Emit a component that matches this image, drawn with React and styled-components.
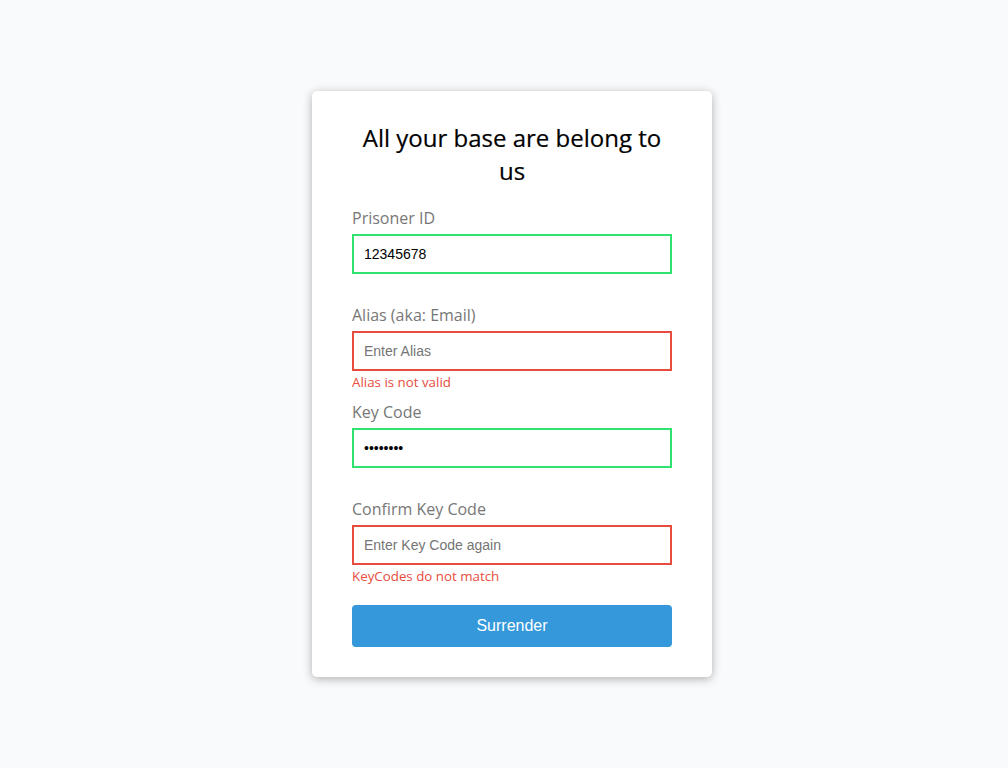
import React from "react";
import styled, { createGlobalStyle } from "styled-components";

const GlobalStyle = createGlobalStyle`
    * {
        box-sizing: border-box;
    }

    body {
        margin: 0;
        background-color: #f9fafb;
        font-family: "Open Sans", "Liberation Sans", sans-serif;
    }
`;

const Page = styled.main`
    min-height: 100vh;
    padding-left: 16px;

    display: flex;
    align-items: center;
    justify-content: center;
`;

const Card = styled.div`
    width: 400px;
    background-color: #fff;
    border-radius: 5px;
    box-shadow: 0 2px 10px rgba(0, 0, 0, 0.3);
    padding: 30px 40px;
`;

const Title = styled.h2`
    margin: 0 0 20px;
    text-align: center;
    font-size: 24px;
    font-weight: 400;
    line-height: 33px;
    color: #000;
    -webkit-text-stroke: 0.2px #000;
`;

const Field = styled.div`
    margin-bottom: 11px;
`;

const Label = styled.label`
    display: block;
    margin-bottom: 5px;
    font-size: 16px;
    line-height: 22px;
    color: #777;
`;

const Input = styled.input`
    display: block;
    width: 100%;
    height: 40px;
    padding: 10px;
    border: 2px solid ${({ $valid }) => ($valid ? "#2ee46f" : "#e74c3c")};
    border-radius: 0;
    outline: none;
    font-family: Arial, "Liberation Sans", sans-serif;
    font-size: 14px;
    color: #000;

    &::placeholder {
        color: #757575;
    }
`;

const Message = styled.small`
    display: block;
    margin-top: 3px;
    height: 16px;
    font-size: 13.33px;
    line-height: 16px;
    color: #e74c3c;
    visibility: ${({ children }) => (children ? "visible" : "hidden")};
`;

const Button = styled.button`
    display: block;
    width: 100%;
    height: 42px;
    margin-top: 21px;
    border: none;
    border-radius: 4px;
    background-color: #3498db;
    color: #fff;
    font-family: Arial, "Liberation Sans", sans-serif;
    font-size: 16px;
    cursor: pointer;
`;

const fields = [
    { label: "Prisoner ID", type: "text", value: "12345678", placeholder: "Enter ID", valid: true },
    { label: "Alias (aka: Email)", type: "text", value: "", placeholder: "Enter Alias", valid: false, error: "Alias is not valid" },
    { label: "Key Code", type: "password", value: "12345678", placeholder: "Enter Key Code", valid: true },
    { label: "Confirm Key Code", type: "password", value: "", placeholder: "Enter Key Code again", valid: false, error: "KeyCodes do not match" },
];

export default function App(){

    return(
        <>
            <GlobalStyle />
            <Page>
                <Card>
                    <Title>All your base are belong to us</Title>

                    <form onSubmit={(e) => e.preventDefault()}>
                        {fields.map((f) => (
                            <Field key={f.label}>
                                <Label>{f.label}</Label>
                                <Input
                                    type={f.type}
                                    defaultValue={f.value}
                                    placeholder={f.placeholder}
                                    $valid={f.valid}
                                />
                                <Message>{f.error || ""}</Message>
                            </Field>
                        ))}

                        <Button type="submit">Surrender</Button>
                    </form>
                </Card>
            </Page>
        </>
    );
};
